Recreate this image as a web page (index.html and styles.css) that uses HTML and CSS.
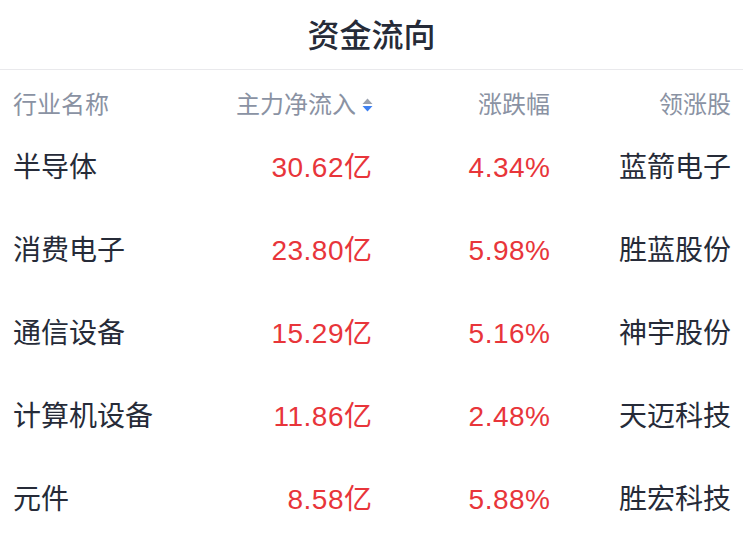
FILE: index.html
```html
<!DOCTYPE html>
<html lang="zh-CN">
<head>
<meta charset="utf-8">
<title>资金流向</title>
<link rel="stylesheet" href="styles.css">
</head>
<body>
<div class="panel">
  <header class="title-bar"><h1 class="title">资金流向</h1></header>
  <div class="table">
    <div class="row head">
      <div class="cell name">行业名称</div>
      <div class="cell num sort">主力净流入<svg class="sort-icon" width="11" height="14" viewBox="0 0 11 14"><path d="M5.5 0.5 L10.5 6 L0.5 6 Z" fill="#9aa1ae"/><path d="M0.5 8 L10.5 8 L5.5 13.5 Z" fill="#3d80f2"/></svg></div>
      <div class="cell num">涨跌幅</div>
      <div class="cell num">领涨股</div>
    </div>
    <div class="row">
      <div class="cell name">半导体</div>
      <div class="cell num red">30.62亿</div>
      <div class="cell num red">4.34%</div>
      <div class="cell num">蓝箭电子</div>
    </div>
    <div class="row">
      <div class="cell name">消费电子</div>
      <div class="cell num red">23.80亿</div>
      <div class="cell num red">5.98%</div>
      <div class="cell num">胜蓝股份</div>
    </div>
    <div class="row">
      <div class="cell name">通信设备</div>
      <div class="cell num red">15.29亿</div>
      <div class="cell num red">5.16%</div>
      <div class="cell num">神宇股份</div>
    </div>
    <div class="row">
      <div class="cell name">计算机设备</div>
      <div class="cell num red">11.86亿</div>
      <div class="cell num red">2.48%</div>
      <div class="cell num">天迈科技</div>
    </div>
    <div class="row">
      <div class="cell name">元件</div>
      <div class="cell num red">8.58亿</div>
      <div class="cell num red">5.88%</div>
      <div class="cell num">胜宏科技</div>
    </div>
  </div>
</div>
</body>
</html>
```

FILE: styles.css
```css
html, body {
  margin: 0;
  padding: 0;
  background: #ffffff;
}
body {
  font-family: "Liberation Sans", "Noto Sans CJK SC", sans-serif;
  color: #262b38;
}
.panel {
  width: 743px;
}
.title-bar {
  height: 69px;
  border-bottom: 1px solid #e9e9ec;
  display: flex;
  align-items: center;
  justify-content: center;
}
.title {
  margin: 0;
  font-family: "Noto Sans CJK SC", sans-serif;
  font-size: 32px;
  font-weight: 500;
  line-height: 32px;
  color: #262b38;
  padding-bottom: 3px;
}
.table {
  padding: 0 12px 0 13px;
}
.row {
  display: grid;
  grid-template-columns: 180px 179px 178px 181px;
  align-items: center;
  height: 83px;
  font-size: 28px;
}
.row.head {
  height: 55px;
  align-items: end;
  padding-bottom: 1px;
  font-size: 24px;
  color: #8a92a3;
}
.row.head .cell {
  line-height: 24px;
  padding-bottom: 8px;
}
.cell {
  white-space: nowrap;
  line-height: 30px;
}
.name {
  text-align: left;
}
.num {
  text-align: right;
}
.red {
  color: #e8353a;
  letter-spacing: 0.5px;
  margin-right: -0.5px;
}
.sort {
  display: flex;
  justify-content: flex-end;
  align-items: center;
  gap: 6px;
}
.sort-icon {
  display: block;
  margin-right: -1px;
}
```
